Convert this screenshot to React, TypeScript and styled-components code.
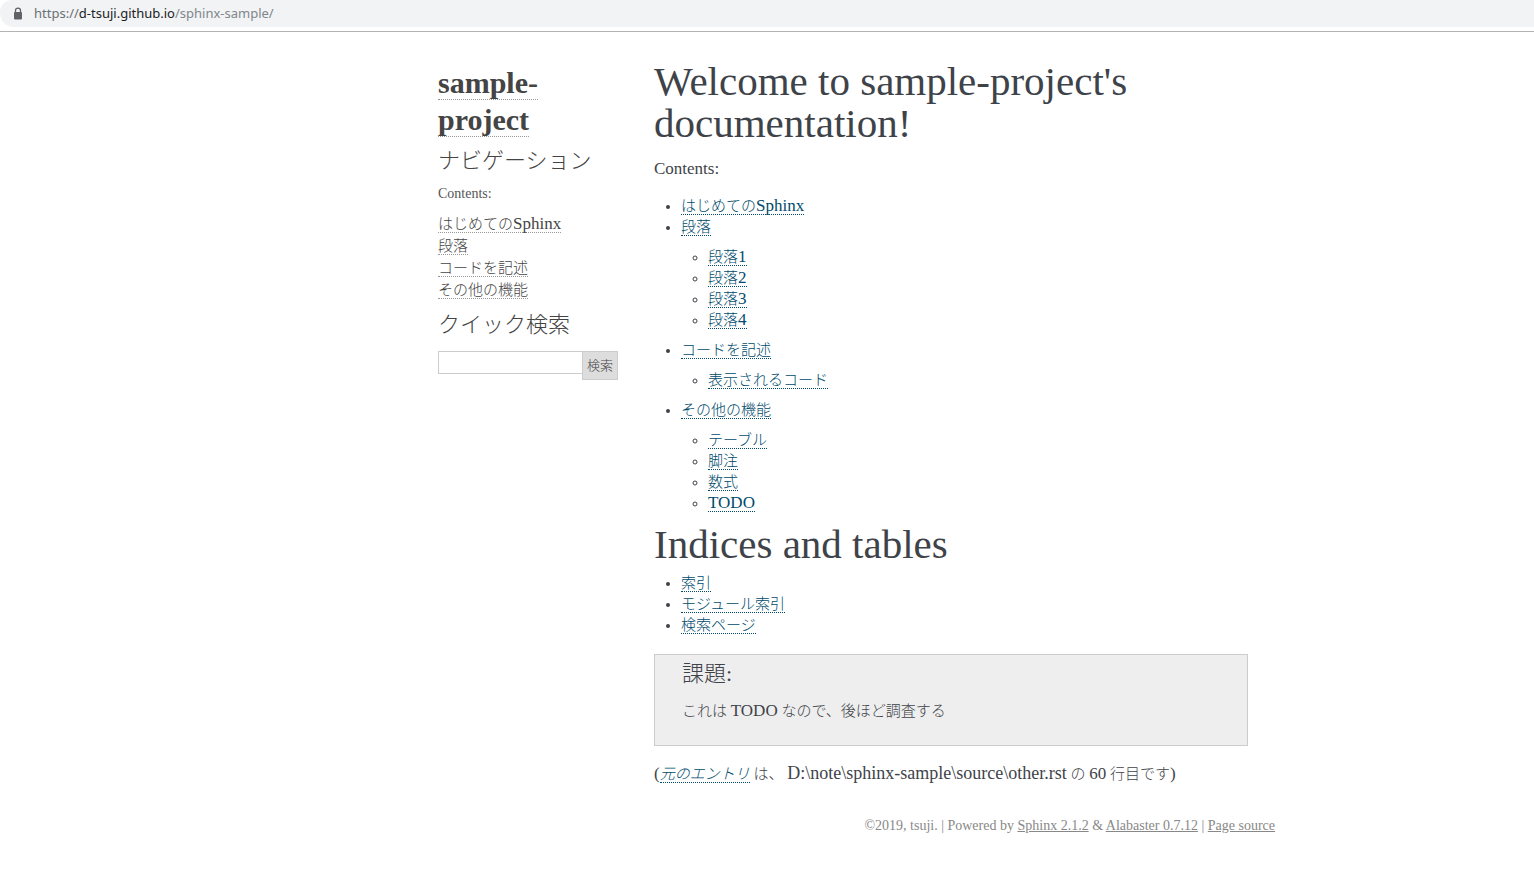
import React from "react";
import styled, { createGlobalStyle } from "styled-components";

const GlobalStyle = createGlobalStyle`
  * { box-sizing: border-box; }
  body {
    margin: 0;
    background: #fff;
    color: #3e4349;
    font-family: "Liberation Serif", "Noto Sans CJK JP", serif;
    font-size: 15px;
    font-weight: 300;
    line-height: 21px;
  }
`;

const AddressArea = styled.header`
  height: 32px;
  border-bottom: 1px solid #b3b3b4;
`;

const AddressBar = styled.div`
  display: flex;
  align-items: center;
  gap: 11px;
  height: 27px;
  padding-left: 13px;
  border-radius: 12px 0 0 14px;
  background: #f1f3f4;
  color: #80868b;
  font-family: "Noto Sans", "Open Sans", sans-serif;
  font-size: 13px;
  font-weight: 400;
`;

const Scheme = styled.span`
  color: #6b7075;
`;

const Host = styled.span`
  color: #202124;
`;

const Page = styled.div`
  display: grid;
  grid-template-columns: 198px minmax(0, 1fr);
  max-width: 846px;
  margin: 28px auto 0;

  @media (min-width: 1300px) {
    margin-left: 429px;
  }
`;

const Sidebar = styled.aside`
  padding: 4px 9px 0;
`;

const Logo = styled.h1`
  margin: 0;
  font-size: 30px;
  font-weight: 700;
  line-height: 37px;
`;

const LogoLink = styled.a`
  border-bottom: 1px dotted #999;
  color: #444;
  text-decoration: none;
`;

const SideHeading = styled.h3`
  margin: 9px 0 8px;
  color: #444;
  font-size: 22px;
  font-weight: 300;
  line-height: 28px;
`;

const SideCaption = styled.p`
  margin: 0 0 9px;
  color: #555;
  font-size: 14px;
`;

const SideList = styled.ul`
  margin: 0 0 10px;
  padding: 0;
  list-style: none;
  line-height: 22px;
`;

const SideLink = styled.a`
  border-bottom: 1px dotted #999;
  color: #444;
  text-decoration: none;
`;

const SearchForm = styled.form`
  display: flex;
  align-items: flex-start;
  margin-top: 12px;
`;

const SearchInput = styled.input`
  flex: 1;
  min-width: 0;
  height: 23px;
  padding: 0 4px;
  border: 1px solid #ccc;
  border-right: 0;
  border-radius: 0;
  background: #fff;
  font: inherit;
`;

const SearchButton = styled.button`
  height: 29px;
  padding: 0 4px;
  border: 1px solid #ccc;
  background: #ddd;
  color: #444;
  font: inherit;
  font-size: 13px;
`;

const Body = styled.main`
  padding: 0 27px;
`;

const Title = styled.h1`
  margin: 0 0 15px;
  font-size: 41px;
  font-weight: 400;
  line-height: 42px;
`;

const Section = styled.section`
  & > ${Title} {
    margin: 9px 0 8px;
  }
`;

const Paragraph = styled.p`
  margin: 0 0 16px;
`;

const Latin = styled.span`
  font-size: 17px;
  line-height: 1;
`;

const FilePath = styled.span`
  font-size: 18px;
  line-height: 1;
`;

const List = styled.ul`
  margin: 0;
  padding-left: 27px;

  & & {
    margin: 9px 0;
  }

  & > li:last-child > & {
    margin-bottom: 0;
  }
`;

const DocLink = styled.a`
  border-bottom: 1px dotted #004b6b;
  color: #004b6b;
  text-decoration: none;
`;

const Todo = styled.div`
  margin: 18px 0;
  padding: 5px 27px 23px;
  border: 1px solid #ccc;
  background: #eee;
`;

const TodoTitle = styled.h2`
  margin: 0 0 13px;
  font-size: 22px;
  font-weight: 300;
  line-height: 28px;
`;

const TodoText = styled.p`
  margin: 0;
`;

const Footer = styled.footer`
  grid-column: 1 / -1;
  margin: 14px 0 30px;
  color: #888;
  font-size: 14px;
  text-align: right;
`;

const FooterLink = styled.a`
  color: #888;
`;

type Entry = { text: string; latin?: string; children?: Entry[] };

const contents: Entry[] = [
  { text: "はじめての", latin: "Sphinx" },
  {
    text: "段落",
    children: [
      { text: "段落", latin: "1" },
      { text: "段落", latin: "2" },
      { text: "段落", latin: "3" },
      { text: "段落", latin: "4" },
    ],
  },
  { text: "コードを記述", children: [{ text: "表示されるコード" }] },
  {
    text: "その他の機能",
    children: [
      { text: "テーブル" },
      { text: "脚注" },
      { text: "数式" },
      { text: "", latin: "TODO" },
    ],
  },
];

const indices: Entry[] = [
  { text: "索引" },
  { text: "モジュール索引" },
  { text: "検索ページ" },
];

const Label = ({ entry }: { entry: Entry }) => (
  <>
    {entry.text}
    {entry.latin && <Latin>{entry.latin}</Latin>}
  </>
);

const Tree = ({ entries }: { entries: Entry[] }) => (
  <List>
    {entries.map((entry) => (
      <li key={entry.text + (entry.latin ?? "")}>
        <DocLink href="#">
          <Label entry={entry} />
        </DocLink>
        {entry.children && <Tree entries={entry.children} />}
      </li>
    ))}
  </List>
);

const LockIcon = () => (
  <svg width="10" height="14" viewBox="0 0 10 14" aria-hidden="true">
    <path d="M2.5 6V3.6a2.5 2.5 0 0 1 5 0V6" fill="none" stroke="#5f6368" strokeWidth="1.3" />
    <rect x="1" y="5" width="8" height="7.5" rx="1" fill="#5f6368" />
  </svg>
);

export default function App() {
  return (
    <>
      <GlobalStyle />
      <AddressArea>
        <AddressBar>
          <LockIcon />
          <div>
            <Scheme>https://</Scheme>
            <Host>d-tsuji.github.io</Host>/sphinx-sample/
          </div>
        </AddressBar>
      </AddressArea>
      <Page>
        <Sidebar>
          <Logo>
            <LogoLink href="#">sample-project</LogoLink>
          </Logo>
          <SideHeading>ナビゲーション</SideHeading>
          <SideCaption>Contents:</SideCaption>
          <SideList>
            {contents.map((entry) => (
              <li key={entry.text}>
                <SideLink href="#">
                  <Label entry={entry} />
                </SideLink>
              </li>
            ))}
          </SideList>
          <SideHeading as="label" htmlFor="quick-search">
            クイック検索
          </SideHeading>
          <SearchForm role="search" onSubmit={(event) => event.preventDefault()}>
            <SearchInput type="text" name="q" id="quick-search" />
            <SearchButton type="submit">検索</SearchButton>
          </SearchForm>
        </Sidebar>
        <Body>
          <Title>Welcome to sample-project's documentation!</Title>
          <Paragraph>
            <Latin>Contents:</Latin>
          </Paragraph>
          <Tree entries={contents} />
          <Section>
            <Title>Indices and tables</Title>
            <Tree entries={indices} />
            <Todo>
              <TodoTitle>課題:</TodoTitle>
              <TodoText>
                これは <Latin>TODO</Latin> なので、後ほど調査する
              </TodoText>
            </Todo>
            <Paragraph>
              <Latin>(</Latin>
              <DocLink href="#">
                <em>元のエントリ</em>
              </DocLink>{" "}
              は、 <FilePath>D:\note\sphinx-sample\source\other.rst</FilePath> の <Latin>60</Latin>{" "}
              行目です<Latin>)</Latin>
            </Paragraph>
          </Section>
        </Body>
        <Footer>
          ©2019, tsuji. | Powered by <FooterLink href="#">Sphinx 2.1.2</FooterLink> &amp;{" "}
          <FooterLink href="#">Alabaster 0.7.12</FooterLink> |{" "}
          <FooterLink href="#">Page source</FooterLink>
        </Footer>
      </Page>
    </>
  );
}
